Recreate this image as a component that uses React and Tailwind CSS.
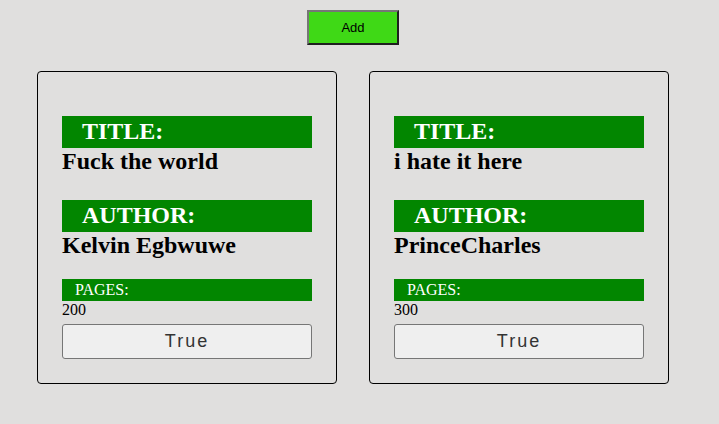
import React from "react";

const books = [
    { title: "Fuck the world", author: "Kelvin Egbwuwe", pages: 200, read: "True" },
    { title: "i hate it here", author: "PrinceCharles", pages: 300, read: "True" },
];

const BookCard = ({ book }) => (
    <div className="w-[300px] border border-black rounded-[4px] px-6 pt-11 pb-6 font-['Liberation_Serif',serif] text-black">
        {/* Title */}
        <div className="bg-[#028600] text-white font-bold text-[24px] leading-[30px] h-8 pl-5">TITLE:</div>
        <div className="font-bold text-[24px] leading-[26px] h-[26px]">{book.title}</div>

        {/* Author */}
        <div className="mt-[26px] bg-[#028600] text-white font-bold text-[24px] leading-[30px] h-8 pl-5">AUTHOR:</div>
        <div className="font-bold text-[24px] leading-[26px] h-[26px]">{book.author}</div>

        {/* Pages */}
        <div className="mt-[21px] bg-[#028600] text-white text-[16px] leading-[22px] h-[22px] pl-[13px]">PAGES:</div>
        <div className="text-[16px] leading-[18px] h-[18px]">{book.pages}</div>

        <button className="mt-[5px] w-full h-[35px] bg-[#efefef] border border-[#767676] rounded-[3px] font-['Liberation_Sans',sans-serif] text-[18px] tracking-[2px] text-[#333]">
            {book.read}
        </button>
    </div>
);

const App = () => {
    return (
        <div className="w-[719px] h-[424px] bg-[#e0dfde] overflow-hidden">
            <div className="w-[706px] flex flex-col items-center pt-[10px]">
                <button className="w-[92px] h-[35px] bg-[#3fd916] border-2 border-t-[#767676] border-l-[#767676] border-r-[#1f1f1f] border-b-[#1f1f1f] font-['Liberation_Sans',sans-serif] text-[13px] text-black">
                    Add
                </button>
                <div className="mt-[26px] flex gap-8">
                    {books.map((b, i) => (
                        <BookCard key={i} book={b} />
                    ))}
                </div>
            </div>
        </div>
    );
};

export default App;
